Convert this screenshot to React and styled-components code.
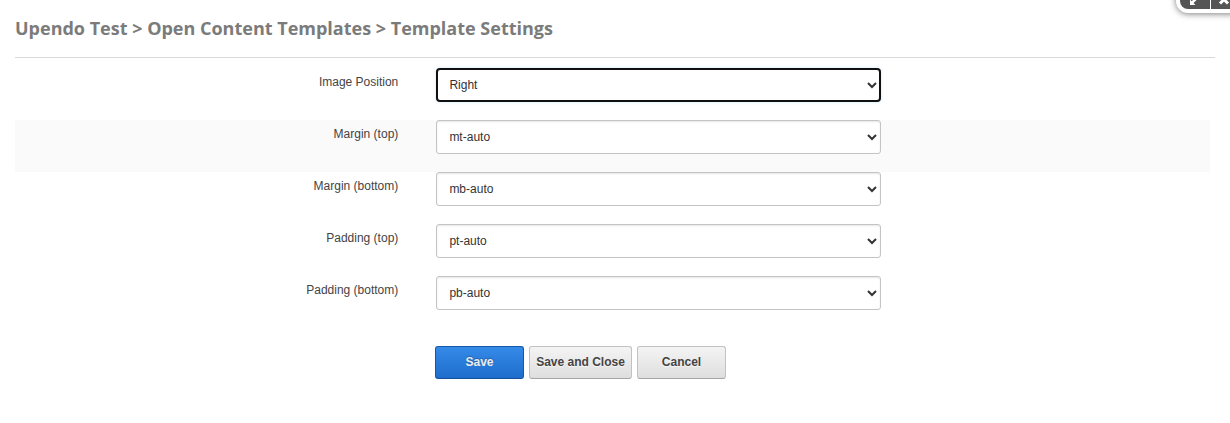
import React from "react";
import styled, { createGlobalStyle, css } from "styled-components";

const GlobalStyle = createGlobalStyle`
  * { box-sizing: border-box; }
  html, body { margin: 0; padding: 0; background: #fff; }
  body {
    overflow: hidden;
    font-family: "Liberation Sans", Arial, sans-serif;
    font-size: 12px;
    color: #444;
  }
`;

const Page = styled.main`
  position: relative;
  height: 423px;
  padding: 0 15px;
  overflow: hidden;
`;

const Title = styled.h1`
  margin: 0;
  height: 58px;
  padding-top: 16px;
  border-bottom: 1px solid #d9d9d9;
  font: 700 18px/25px "Open Sans", sans-serif;
  color: #7b7b7b;
  white-space: nowrap;
`;

const Form = styled.form`
  display: flex;
  flex-direction: column;
  padding-top: 10px;
  margin-right: 5px;
`;

const Row = styled.div`
  display: flex;
  height: 52px;
  background: ${({ $shaded }) => ($shaded ? "#fafafa" : "transparent")};
`;

const Label = styled.label`
  width: 383.3px;
  margin-right: 37.7px;
  padding-top: 5px;
  line-height: 18px;
  text-align: right;
`;

const Select = styled.select`
  width: 445px;
  height: 34px;
  margin: 0;
  padding: 0 0 0 8.4px;
  border: 1px solid #c4c4c4;
  border-radius: 3px;
  background: #fff;
  box-shadow: inset 0 1px 2px rgba(0, 0, 0, 0.1);
  font: 12px "Liberation Sans", Arial, sans-serif;
  color: #333;
  outline: none;
  ${({ $active }) =>
    $active &&
    css`
      border-radius: 4px;
      outline: 2px solid #101010;
      outline-offset: -2px;
      box-shadow: 0 0 3px rgba(82, 168, 236, 0.3);
    `}
`;

const Actions = styled.div`
  display: flex;
  gap: 5px;
  padding: 18px 0 0 420px;
`;

const Button = styled.button`
  width: ${({ $width }) => $width}px;
  height: 33px;
  padding: 0 0 1px;
  border: 1px solid #c2c2c2;
  border-bottom-color: #a5a5a5;
  border-radius: 3px;
  background: linear-gradient(#f4f4f4, #dedede);
  font: 700 12px "Liberation Sans", Arial, sans-serif;
  color: #444;
  text-shadow: 0 1px 1px rgba(255, 255, 255, 0.75);
  white-space: nowrap;
  ${({ $primary }) =>
    $primary &&
    css`
      border-color: #1459a5;
      border-bottom-color: #11519a;
      background: linear-gradient(#358ae8, #1e6dcc);
      color: #eee;
      text-shadow: 0 -1px 1px rgba(0, 0, 0, 0.25);
    `}
`;

const WindowControls = styled.div`
  position: absolute;
  top: -18px;
  left: 1176px;
  display: flex;
  gap: 1px;
  width: 70px;
  height: 31px;
  padding: 4px;
  border-radius: 12px;
  background: #fff;
  box-shadow: 0 1px 6px rgba(0, 0, 0, 0.5);
`;

const Control = styled.span`
  flex: 0 0 30px;
  height: 23px;
  background: #555;
  border-radius: ${({ $first }) => ($first ? "8px 0 0 8px" : "0 8px 8px 0")};
  svg { display: block; }
`;

const fields = [
  ["image-position", "Image Position", "Right"],
  ["margin-top", "Margin (top)", "mt-auto"],
  ["margin-bottom", "Margin (bottom)", "mb-auto"],
  ["padding-top", "Padding (top)", "pt-auto"],
  ["padding-bottom", "Padding (bottom)", "pb-auto"],
];

function ExpandIcon() {
  return (
    <svg width="30" height="23" viewBox="0 0 30 23" fill="#fff">
      <path d="M10 13.5l1.7 1.7 3.6-3.4 1.7 1.8-3.5 3.5 1.9 1.9H10z" />
      <path d="M14 8h6v6l-2-2-2 2-2-2 2-2z" />
    </svg>
  );
}

function CloseIcon() {
  return (
    <svg width="30" height="23" viewBox="0 0 30 23" fill="none" stroke="#fff" strokeWidth="3">
      <path d="M9 9.5l8 8M17 9.5l-8 8" />
    </svg>
  );
}

export default function App() {
  return (
    <Page>
      <GlobalStyle />
      <Title>Upendo Test &gt; Open Content Templates &gt; Template Settings</Title>
      <Form onSubmit={(e) => e.preventDefault()}>
        {fields.map(([id, label, value], i) => (
          <Row key={id} $shaded={i === 1}>
            <Label htmlFor={id}>{label}</Label>
            <Select id={id} $active={i === 0}>
              <option>{value}</option>
            </Select>
          </Row>
        ))}
        <Actions>
          <Button $primary $width={89}>Save</Button>
          <Button $width={103}>Save and Close</Button>
          <Button $width={89}>Cancel</Button>
        </Actions>
      </Form>
      <WindowControls>
        <Control $first><ExpandIcon /></Control>
        <Control><CloseIcon /></Control>
      </WindowControls>
    </Page>
  );
}
